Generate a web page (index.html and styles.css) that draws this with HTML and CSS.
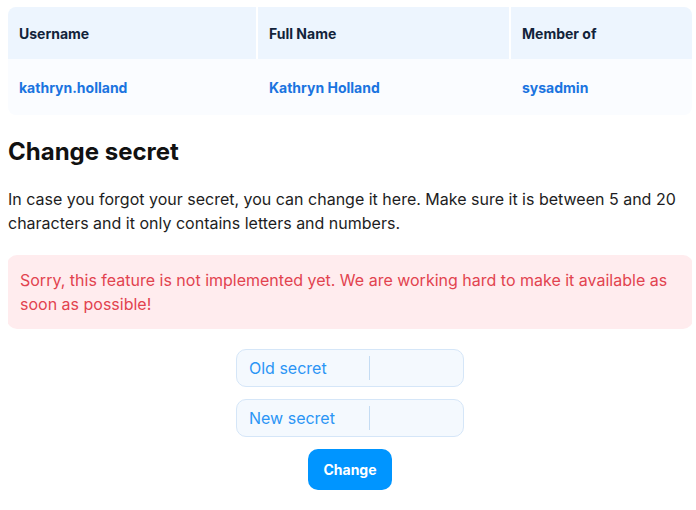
FILE: index.html
```html
<!DOCTYPE html>
<html>
<head>
<meta charset="utf-8">
<link rel="stylesheet" href="styles.css">
</head>
<body>
<div class="table">
  <div class="cell head">Username</div>
  <div class="cell head">Full Name</div>
  <div class="cell head">Member of</div>
  <div class="cell body">kathryn.holland</div>
  <div class="cell body">Kathryn Holland</div>
  <div class="cell body">sysadmin</div>
</div>
<h2 class="title">Change secret</h2>
<p class="desc">In case you forgot your secret, you can change it here. Make sure it is between 5 and 20 characters and it only contains letters and numbers.</p>
<div class="alert">Sorry, this feature is not implemented yet. We are working hard to make it available as soon as possible!</div>
<form class="form">
  <label class="field"><span class="label">Old secret</span><span class="sep"></span><input class="input" type="password"></label>
  <label class="field"><span class="label">New secret</span><span class="sep"></span><input class="input" type="password"></label>
  <button class="btn" type="button">Change</button>
</form>
</body>
</html>
```
FILE: styles.css
```css
* { box-sizing: border-box; }
html, body { background: #fff; }
body {
  margin: 7px 4px 8px 8px;
  font-family: Inter, "Noto Sans", sans-serif;
  color: #16161a;
}
.table {
  display: grid;
  grid-template-columns: 248px 251px 1fr;
  column-gap: 2px;
  border-radius: 8px;
  overflow: hidden;
  background: #fff;
}
.cell {
  font-size: 14px;
  font-weight: 700;
  padding: 0 11px;
  display: flex;
  align-items: center;
}
.head {
  height: 52px;
  background: #edf5fe;
  color: #12233a;
}
.body {
  height: 56px;
  background: #fafcff;
  color: #1a74e0;
  margin-left: -2px;
  padding-left: 13px;
}
.cell.body:nth-child(4) { margin-left: 0; padding-left: 11px; }
.title {
  font-size: 24px;
  font-weight: 700;
  margin: 21px 0 0 0;
  line-height: 32px;
  color: #111;
}
.desc {
  font-size: 16px;
  line-height: 24px;
  margin: 19px 0 0 0;
  color: #1d1d22;
}
.alert {
  margin-top: 20px;
  background: #ffecee;
  color: #e2434f;
  border-radius: 10px;
  padding: 13px 12px 13px 13px;
  font-size: 16px;
  line-height: 24px;
  margin-left: -1px;
  margin-right: -1px;
}
.form {
  margin-top: 20px;
  display: flex;
  flex-direction: column;
  align-items: center;
  gap: 12px;
}
.field {
  width: 228px;
  height: 38px;
  border: 1px solid #d5e6f8;
  background: #f4f9fe;
  border-radius: 10px;
  display: flex;
  align-items: center;
  padding-left: 12px;
}
.label {
  width: 120px;
  color: #2b95f5;
  font-size: 16px;
}
.sep {
  width: 1px;
  height: 24px;
  background: #c4dcf3;
}
.input {
  flex: 1;
  min-width: 0;
  border: 0;
  background: transparent;
  outline: none;
  height: 100%;
}
.btn {
  width: 84px;
  height: 41px;
  border: 0;
  border-radius: 10px;
  background: #0095ff;
  color: #fff;
  font-family: Inter, "Noto Sans", sans-serif;
  font-size: 14px;
  font-weight: 700;
}
```
